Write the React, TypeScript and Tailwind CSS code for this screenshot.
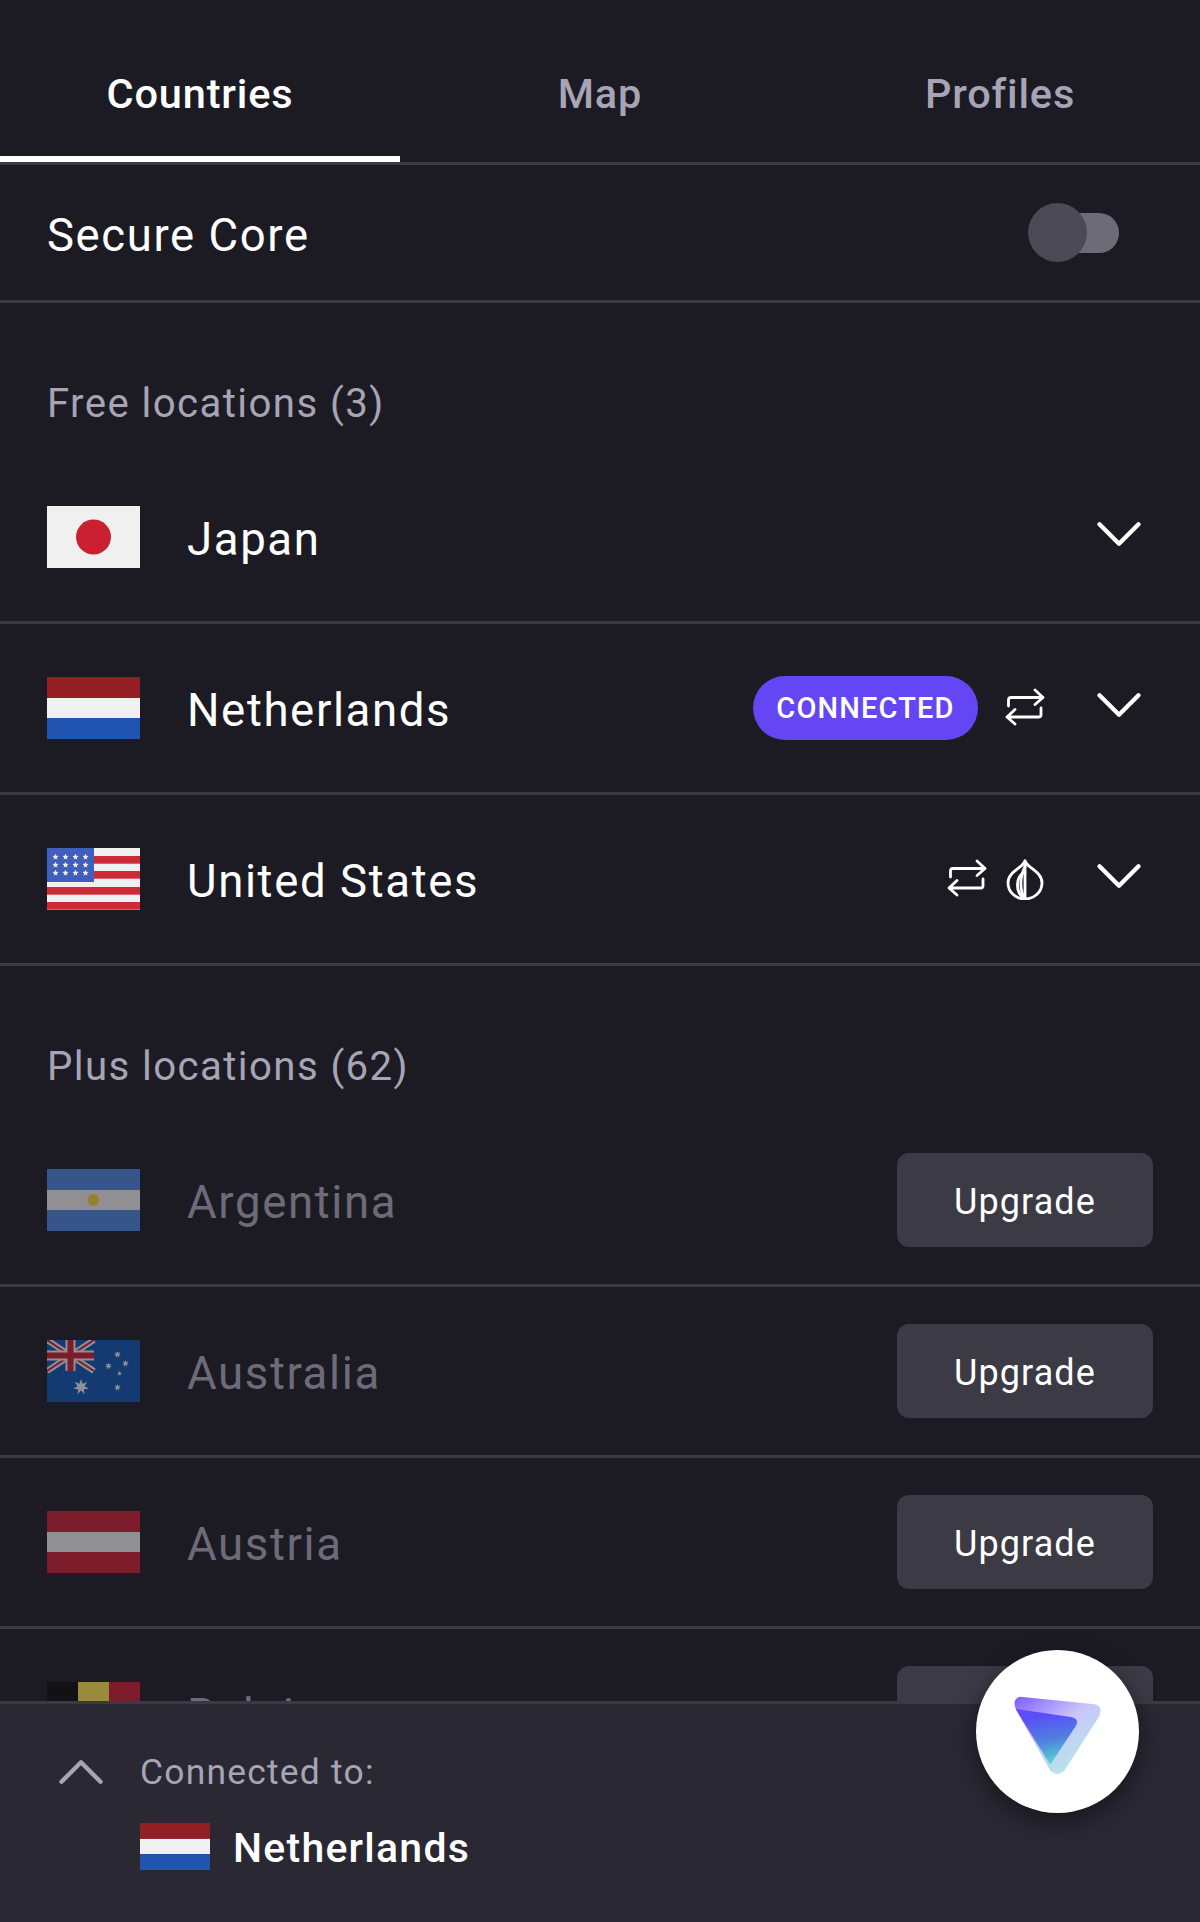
import { ChevronDown, ChevronUp } from 'lucide-react';

type FlagCode = 'jp' | 'nl' | 'us' | 'ar' | 'au' | 'at' | 'be';

function starPoints(cx: number, cy: number, r: number, spikes = 5) {
  const pts: string[] = [];
  for (let i = 0; i < spikes * 2; i++) {
    const rad = i % 2 === 0 ? r : r * 0.45;
    const a = (Math.PI * i) / spikes - Math.PI / 2;
    pts.push(`${(cx + rad * Math.cos(a)).toFixed(2)},${(cy + rad * Math.sin(a)).toFixed(2)}`);
  }
  return pts.join(' ');
}

function FlagArt({ code }: { code: FlagCode }) {
  switch (code) {
    case 'jp':
      return (
        <>
          <rect width="93" height="62" fill="#f0f0f0" />
          <circle cx="46.5" cy="31" r="17.5" fill="#cb2030" />
        </>
      );
    case 'nl':
      return (
        <>
          <rect width="93" height="21" fill="#931e24" />
          <rect y="21" width="93" height="20" fill="#f0f0f0" />
          <rect y="41" width="93" height="21" fill="#2054b0" />
        </>
      );
    case 'us':
      return (
        <>
          <rect width="93" height="62" fill="#f0f0f0" />
          {[8, 23, 39, 54].map((y) => (
            <rect key={y} y={y} width="93" height="7.7" fill="#cb2a36" />
          ))}
          <rect width="47" height="34" fill="#3f5ebd" />
          {[9, 17, 25].map((y) =>
            [8.5, 18.5, 28.5, 38.5].map((x) => (
              <polygon key={`${x}-${y}`} points={starPoints(x, y, 3.2)} fill="#f0f0f0" />
            ))
          )}
        </>
      );
    case 'ar':
      return (
        <>
          <rect width="93" height="21" fill="#4a86e0" />
          <rect y="21" width="93" height="20" fill="#f0f0f0" />
          <rect y="41" width="93" height="21" fill="#4a86e0" />
          <circle cx="46.5" cy="31" r="6" fill="#ffd23a" />
        </>
      );
    case 'au':
      return (
        <>
          <rect width="93" height="62" fill="#0f54b2" />
          <path d="M0 0L47 31M47 0L0 31" stroke="#f0f0f0" strokeWidth="6" />
          <path d="M0 0L47 31M47 0L0 31" stroke="#cc1d2f" strokeWidth="2" />
          <path d="M23.5 0V31M0 15.5H47" stroke="#f0f0f0" strokeWidth="10" />
          <path d="M23.5 0V31M0 15.5H47" stroke="#cc1d2f" strokeWidth="6" />
          <polygon points={starPoints(34, 47, 8, 7)} fill="#f0f0f0" />
          <polygon points={starPoints(70.5, 14.5, 3.6, 7)} fill="#f0f0f0" />
          <polygon points={starPoints(61.5, 26, 3.6, 7)} fill="#f0f0f0" />
          <polygon points={starPoints(78.5, 23.5, 3.6, 7)} fill="#f0f0f0" />
          <polygon points={starPoints(72.5, 33.5, 2.6)} fill="#f0f0f0" />
          <polygon points={starPoints(70.5, 47.5, 3.6, 7)} fill="#f0f0f0" />
        </>
      );
    case 'at':
      return (
        <>
          <rect width="93" height="21" fill="#cc1d2f" />
          <rect y="21" width="93" height="20" fill="#f0f0f0" />
          <rect y="41" width="93" height="21" fill="#cc1d2f" />
        </>
      );
    case 'be':
      return (
        <>
          <rect width="31" height="62" fill="#0a0a0a" />
          <rect x="31" width="31" height="62" fill="#ffe550" />
          <rect x="62" width="31" height="62" fill="#cc1d2f" />
        </>
      );
  }
}

function Flag({ code, className }: { code: FlagCode; className: string }) {
  return (
    <svg viewBox="0 0 93 62" preserveAspectRatio="none" className={className}>
      <FlagArt code={code} />
    </svg>
  );
}

function RepeatIcon() {
  return (
    <svg viewBox="0 0 40 38" className="h-[38px] w-[40px]" fill="none" stroke="white" strokeWidth="2.8" strokeLinecap="round" strokeLinejoin="round">
      <path d="M3.5 18V12Q3.5 9.5 6 9.5H38M30 2L38 9.5L30 16.5" />
      <path d="M36 20V27Q36 29 33.5 29H2M10 21.5L2 29L10 36" />
    </svg>
  );
}

function OnionIcon() {
  return (
    <svg viewBox="0 0 40 42" className="h-[42px] w-[40px]" fill="none" stroke="white" strokeWidth="2.8" strokeLinecap="round" strokeLinejoin="round">
      <path d="M20 3C22 10 37 13 37 25A17 16 0 0 1 3 25C3 13 18 10 20 3Z" />
      <path d="M20 3V41" />
      <path d="M20 14C11 18 9 34 20 41" />
      <path d="M20 9C15 18 14 32 20 41" />
    </svg>
  );
}

function Logo() {
  return (
    <svg viewBox="330 225 280 250" className="h-[83px] w-[93px]">
      <defs>
        <linearGradient id="logoOuter" x1="340" y1="240" x2="520" y2="470" gradientUnits="userSpaceOnUse">
          <stop offset="0" stopColor="#7f60fb" />
          <stop offset="0.5" stopColor="#c9c4fa" />
          <stop offset="1" stopColor="#b4ece6" />
        </linearGradient>
        <linearGradient id="logoInner" x1="420" y1="290" x2="450" y2="440" gradientUnits="userSpaceOnUse">
          <stop offset="0" stopColor="#5b4df8" />
          <stop offset="0.5" stopColor="#4f80e0" />
          <stop offset="1" stopColor="#5cdccb" />
        </linearGradient>
      </defs>
      <path d="M358 233L582 256Q608 262 596 292L492 454Q470 478 447 454L345 272Q332 238 358 233Z" fill="url(#logoOuter)" />
      <path d="M345 270L510 294Q536 298 526 320L448 438L345 272Z" fill="url(#logoInner)" />
    </svg>
  );
}

function RowChevron() {
  return (
    <div className="flex w-[69px] justify-center pb-[6px]">
      <ChevronDown className="h-[78px] w-[78px] shrink-0 text-white" strokeWidth={1.35} />
    </div>
  );
}

function CountryRow({ code, name, children }: { code: FlagCode; name: string; children?: React.ReactNode }) {
  return (
    <div className="flex h-[171px] shrink-0 items-center border-b-[3px] border-[#3b3945] pl-[47px] pr-[47px]">
      <Flag code={code} className="h-[62px] w-[93px] shrink-0" />
      <span className="ml-[47px] flex-1 pt-[7px] text-[45.6px] tracking-[0.035em] text-white">{name}</span>
      {children}
    </div>
  );
}

function LockedRow({ code, name }: { code: FlagCode; name: string }) {
  return (
    <div className="flex h-[171px] shrink-0 items-start border-b-[3px] border-[#3b3945] pl-[47px] pr-[47px] pt-[37px]">
      <Flag code={code} className="mt-[16px] h-[62px] w-[93px] shrink-0 opacity-55" />
      <span className="ml-[47px] mt-[16px] flex-1 text-[45.6px] tracking-[0.035em] text-[#6d6b78]">{name}</span>
      <button className="flex h-[94px] w-[256px] items-center justify-center rounded-[12px] bg-[#3b3a45] pt-[4px] text-[36px] tracking-[0.03em] text-white">
        Upgrade
      </button>
    </div>
  );
}

function SectionLabel({ text }: { text: string }) {
  return (
    <div className="h-[150px] shrink-0 pl-[47px] pt-[77px] text-[40.2px] leading-[48px] tracking-[0.035em] text-[#a7a4b5]">
      {text}
    </div>
  );
}

export default function App() {
  return (
    <div className="relative flex h-[1922px] w-[1200px] flex-col overflow-hidden bg-[#1c1b24] font-['Roboto',sans-serif]">
      <div className="flex h-[165px] shrink-0 border-b-[3px] border-[#3b3945] text-[41.5px] font-medium tracking-[0.02em]">
        <div className="relative flex w-[400px] items-center justify-center pt-[27px] text-white">
          Countries
          <div className="absolute bottom-0 left-0 h-[6px] w-full bg-white" />
        </div>
        <div className="flex w-[400px] items-center justify-center pt-[27px] text-[#a7a4b5]">Map</div>
        <div className="flex w-[400px] items-center justify-center pt-[27px] text-[#a7a4b5]">Profiles</div>
      </div>

      <div className="flex h-[138px] shrink-0 items-center justify-between border-b-[3px] border-[#3b3945] pl-[47px] pr-[81px] text-[45.5px] tracking-[0.035em] text-white">
        <span className="pt-[8px]">Secure Core</span>
        <div className="relative flex h-[59px] w-[91px] items-center">
          <div className="ml-[20px] h-[40px] flex-1 rounded-full bg-[#6d6b78]" />
          <div className="absolute left-0 top-0 h-[59px] w-[59px] rounded-full bg-[#4a4955]" />
        </div>
      </div>

      <div className="flex min-h-0 flex-1 flex-col overflow-hidden">
        <SectionLabel text="Free locations (3)" />
        <CountryRow code="jp" name="Japan">
          <RowChevron />
        </CountryRow>
        <CountryRow code="nl" name="Netherlands">
          <div className="flex h-[64px] w-[225px] -translate-x-px items-center justify-center rounded-full bg-[#6546f5] pt-[2px] text-[29px] font-medium tracking-[0.04em] text-white">
            CONNECTED
          </div>
          <div className="ml-[26px] flex w-[40px] justify-center pb-[2px]">
            <RepeatIcon />
          </div>
          <div className="ml-[39px]">
            <RowChevron />
          </div>
        </CountryRow>
        <CountryRow code="us" name="United States">
          <div className="flex w-[40px] justify-center pb-[2px]">
            <RepeatIcon />
          </div>
          <div className="ml-[18px] flex w-[40px] justify-center">
            <OnionIcon />
          </div>
          <div className="ml-[39px]">
            <RowChevron />
          </div>
        </CountryRow>
        <SectionLabel text="Plus locations (62)" />
        <LockedRow code="ar" name="Argentina" />
        <LockedRow code="au" name="Australia" />
        <LockedRow code="at" name="Austria" />
        <LockedRow code="be" name="Belgium" />
      </div>

      <div className="relative flex h-[221px] shrink-0 border-t-[3px] border-[#3b3945] bg-[#292833]">
        <div className="flex w-[140px] justify-center pl-[22px] pt-[29px]">
          <ChevronUp className="h-[78px] w-[78px] shrink-0 text-[#a7a4b5]" strokeWidth={1.35} />
        </div>
        <div className="flex flex-col pt-[46px]">
          <span className="text-[35.4px] leading-[44px] tracking-[0.035em] text-[#a7a4b5]">Connected to:</span>
          <div className="mt-[24px] flex items-center">
            <Flag code="nl" className="mb-[4px] h-[47px] w-[70px]" />
            <span className="ml-[23px] text-[41px] font-medium tracking-[0.03em] text-white">Netherlands</span>
          </div>
        </div>
      </div>

      <div className="absolute left-[976px] top-[1650px] flex h-[163px] w-[163px] items-center justify-center rounded-full bg-white pt-[8px] shadow-[0_8px_24px_rgba(0,0,0,0.45)]">
        <Logo />
      </div>
    </div>
  );
}
